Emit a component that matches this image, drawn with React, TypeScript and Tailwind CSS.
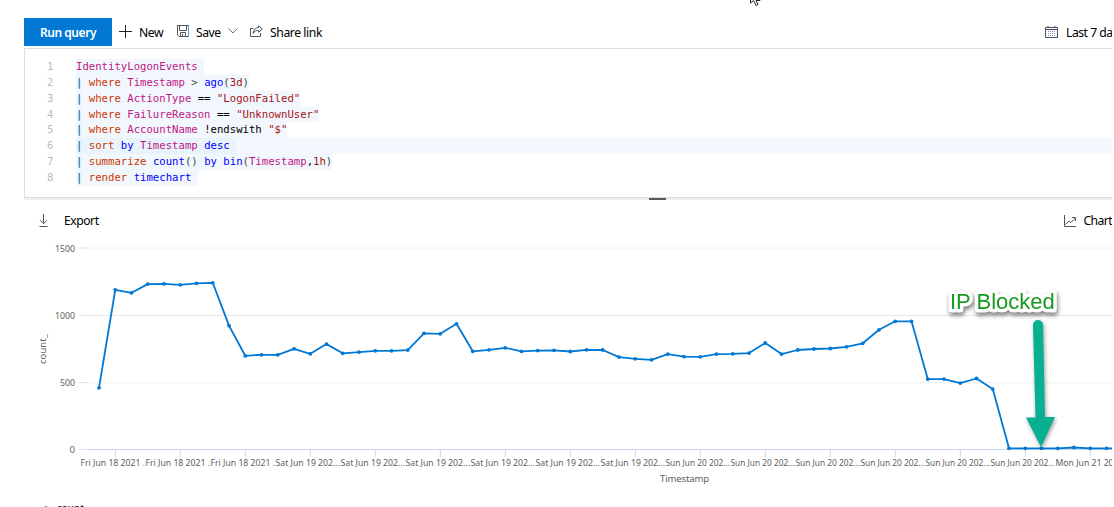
import React from 'react';

type Token = [text: string, color: string];

const FIELD = 'text-[#c01884]';
const OPERATOR = 'text-[#cc3700]';
const KEYWORD = 'text-[#0000ff]';
const LITERAL = 'text-[#a31515]';
const PLAIN = 'text-black';
const MUTED = 'text-[#3b4a3f]';

const QUERY: Token[][] = [
    [['IdentityLogonEvents ', FIELD]],
    [['where ', OPERATOR], ['Timestamp ', FIELD], ['> ', MUTED], ['ago', KEYWORD], ['(', MUTED], ['3d', LITERAL], [')', MUTED]],
    [['where ', OPERATOR], ['ActionType ', FIELD], ['== ', PLAIN], ['"LogonFailed"', LITERAL]],
    [['where ', OPERATOR], ['FailureReason ', FIELD], ['== ', PLAIN], ['"UnknownUser"', LITERAL]],
    [['where ', OPERATOR], ['AccountName ', FIELD], ['!endswith ', PLAIN], ['"$"', LITERAL]],
    [['sort ', OPERATOR], ['by ', KEYWORD], ['Timestamp ', FIELD], ['desc ', KEYWORD]],
    [['summarize ', OPERATOR], ['count', KEYWORD], ['() ', MUTED], ['by ', KEYWORD], ['bin', KEYWORD], ['(', MUTED], ['Timestamp', FIELD], [',', PLAIN], ['1h', LITERAL], [')', MUTED]],
    [['render ', OPERATOR], ['timechart ', KEYWORD]],
];
const ACTIVE_LINE = 5;

// y offsets of the hourly points inside the chart (0 is at 209.5, 1500 at 8)
const POINTS = [
    148, 50, 53, 44.3, 44, 45, 43.5, 43, 85.8, 116, 115, 115, 109, 114, 104.3, 113.5, 112.3, 111, 111, 110.3,
    93.5, 94, 84, 111.5, 110, 108, 111.5, 110.8, 110.5, 111.7, 110, 110.2, 117.3, 119, 120, 114.3, 116.8, 117,
    114.3, 114, 113.3, 103.2, 114.3, 110.2, 109.2, 108.7, 107, 103.5, 90, 81.5, 81.5, 139.3, 139.3, 143.3, 138.7,
    149.3, 208.5, 208.5, 208.5, 208.5, 207.7, 208.5, 208.5, 208.5,
].map((y, i) => ({ x: 99 + i * 16.25, y }));

const X_LABELS = [
    'Fri Jun 18 2021 .', 'Fri Jun 18 2021 .', 'Fri Jun 18 2021 .',
    'Sat Jun 19 202...', 'Sat Jun 19 202...', 'Sat Jun 19 202...', 'Sat Jun 19 202...', 'Sat Jun 19 202...', 'Sat Jun 19 202...',
    'Sun Jun 20 202...', 'Sun Jun 20 202...', 'Sun Jun 20 202...', 'Sun Jun 20 202...', 'Sun Jun 20 202...', 'Sun Jun 20 202...',
    'Mon Jun 21 202...',
];

const Y_LABELS = [
    { text: '1500', y: 8, width: 20, stroke: '#f2f2f2' },
    { text: '1000', y: 75.5, width: 20, stroke: '#e6e6e6' },
    { text: '500', y: 142.7, width: 15, stroke: '#f0f0f0' },
    { text: '0', y: 209.5, width: 5.5, stroke: '#ccd6eb' },
];

const Icon: React.FC<{ className: string; viewBox: string; children: React.ReactNode }> = ({ className, viewBox, children }) => (
    <svg className={`shrink-0 ${className}`} viewBox={viewBox} fill="none" stroke="#555" strokeWidth="1">
        {children}
    </svg>
);

const Toolbar: React.FC = () => (
    <div className="flex h-7 items-center text-[12.2px] text-black">
        <button className="h-7 w-[88px] shrink-0 bg-[#0078d4] text-[12px] font-semibold text-white">
            <span className="relative top-px tracking-[-0.45px]">Run query</span>
        </button>
        <div className="flex w-[58px] shrink-0 items-center pl-[7px]">
            <Icon className="h-[13px] w-[13px]" viewBox="0 0 13 13">
                <path d="M6.5 0v13M0 6.5h13" stroke="#222" />
            </Icon>
            <span className="relative top-px ml-[7px] tracking-[-0.4px]">New</span>
        </div>
        <div className="flex w-[73px] shrink-0 items-center pl-[7px]">
            <Icon className="-mt-0.5 h-3 w-3" viewBox="0 0 12 12">
                <path d="M.5.5h11v11H2L.5 10z" />
                <path d="M2.5.5v5h7v-5M3.5 11.5v-4h5v4M5.5 9v2.5" />
                <path d="M11.5 0v12" stroke="#4a9ad0" />
            </Icon>
            <span className="relative top-px ml-[7px] tracking-[-0.5px]">Save</span>
            <Icon className="-mt-0.5 ml-[7px] h-[6px] w-[10px]" viewBox="0 0 10 6">
                <path d="M.5.5 5 5 9.5.5" stroke="#777" />
            </Icon>
        </div>
        <div className="flex shrink-0 items-center pl-[7px]">
            <Icon className="-mt-0.5 h-3 w-[13px]" viewBox="0 0 13 12">
                <path d="M3.5 3.5h-3v8h10V8" />
                <path d="M8.5.7 12.3 4 8.5 7.3V5.5C6 5.3 4.3 6.3 3 8.5 3.3 5 5.5 2.8 8.5 2.5z" />
            </Icon>
            <span className="relative top-px ml-[7px] tracking-[-0.42px]">Share link</span>
        </div>
        <div className="ml-auto flex w-[67px] shrink-0 items-center whitespace-nowrap">
            <Icon className="h-3 w-[13px]" viewBox="0 0 13 12">
                <path d="M.5 1.5h12v10H.5zM.5 3.5h12M3 0v2M10 0v2" stroke="#4d4a66" />
                <path d="M3 5.5h7M3 7.5h7M3 9.5h7" stroke="#7899b8" strokeDasharray="1 1" />
            </Icon>
            <span className="relative top-px ml-2 tracking-[-0.5px]">Last 7 da</span>
        </div>
    </div>
);

const QueryEditor: React.FC = () => (
    <div className="mt-[2px] h-[150px] border-y border-l border-[#dcdcdc] pt-[10px] font-['DejaVu_Sans_Mono',monospace] text-[10.65px] leading-[15.86px] shadow-[0_2px_0_#eeeeee]">
        {QUERY.map((tokens, i) => (
            <div key={i} className="flex h-[15.86px] whitespace-pre">
                <span className="w-[51px] pl-[22px] text-[#b8bcc0]">{i + 1}</span>
                <div className={i === ACTIVE_LINE ? 'flex-1 bg-[#f3f8fe]' : 'flex-1'}>
                    <span className={i === ACTIVE_LINE ? 'inline-flex h-full bg-[#e9f3fc]' : 'inline-flex h-full bg-[#f2f7fe]'}>
                        {i > 0 && <span className="font-bold text-[#1678b0]">| </span>}
                        {tokens.map(([text, color], j) => (
                            <span key={j} className={color}>{text}</span>
                        ))}
                    </span>
                </div>
            </div>
        ))}
    </div>
);

const ResultsBar: React.FC = () => (
    <div className="flex h-[38px] items-center pt-px pl-[39px] text-[12.2px] text-black">
        <Icon className="-mt-0.5 h-[13px] w-[9px]" viewBox="0 0 9 13">
            <path d="M4.5 0v9.5M1 6.2l3.5 3.5L8 6.2M.5 12.5h8" />
        </Icon>
        <span className="ml-4 tracking-[-0.5px]">Export</span>
        <div className="ml-auto flex w-12 items-center whitespace-nowrap">
            <Icon className="h-3 w-3" viewBox="0 0 12 12">
                <path d="M.5 0v11.5H12M1.5 9.5 5 6l2 1.5L11.3 3M8 2.5h3.5V6" />
            </Icon>
            <span className="ml-[7.5px] shrink-0 tracking-[-0.6px]">Chart</span>
        </div>
    </div>
);

const TimeChart: React.FC = () => (
    <svg className="block h-[267px] w-[1112px] text-[9.5px]" viewBox="0 0 1112 267" fill="#606060">
        {Y_LABELS.map(({ text, y, width, stroke }) => (
            <g key={text}>
                <path d={`M79 ${y}H1112`} stroke={stroke} />
                <path d={`M79 ${y}h9`} stroke="#dbe3f1" />
                <text x={75} y={y + 3.5} textAnchor="end" textLength={width} lengthAdjust="spacingAndGlyphs">{text}</text>
            </g>
        ))}
        {X_LABELS.map((label, i) => (
            <g key={i}>
                <path d={`M${115.3 + i * 65} 210v7`} stroke="#ccd6eb" />
                <text x={80.5 + i * 65} y={225.7} textLength={i === 15 ? 70 : 64.5} lengthAdjust="spacingAndGlyphs">{label}</text>
            </g>
        ))}
        <text x={660} y={242} textLength={49}>Timestamp</text>
        <text transform="translate(46 124) rotate(-90)" textLength={30}>count_</text>

        <polyline points={POINTS.map(p => `${p.x},${p.y - 0.2}`).join(' ')} fill="none" stroke="#0078d4" strokeWidth="1.8" strokeLinejoin="round" />
        {POINTS.map(p => <circle key={p.x} cx={p.x} cy={p.y - 0.2} r="1.9" fill="#0078d4" />)}

        <path d="M39 269h14" stroke="#0078d4" />
        <circle cx="46" cy="268.5" r="2.2" fill="#0078d4" />
        <text x="57" y="271" fontSize="9.5" fontWeight="600" fill="#333" textLength="27">count</text>

        {/* annotation */}
        <g className="drop-shadow-[1px_3px_2px_rgba(0,0,0,0.5)]">
            <text x="950" y="69" fontSize="22" className="font-['Liberation_Sans',Arial,sans-serif]" fill="#169a22" stroke="#fff" strokeWidth="7" strokeLinejoin="round" paintOrder="stroke">
                IP Blocked
            </text>
        </g>
        <g className="drop-shadow-[1px_2px_2px_rgba(0,0,0,0.4)]" fill="#08b092">
            <path d="M1033 85a5 5 0 0 1 10 0l2 92h10l-14 30-15-29.5h9.5z" />
        </g>
    </svg>
);

const MousePointer: React.FC = () => (
    <svg className="absolute top-0 left-[750px] h-[7px] w-[11px]" viewBox="0 0 11 7" fill="#fff" stroke="#222">
        <path d="M.5-9v12l3-2.5 2.5 5 2-1-2-4h4z" />
    </svg>
);

export default function App() {
    return (
        <div className="relative h-[507px] w-[1114px] overflow-hidden bg-white font-['Noto_Sans','Open_Sans',sans-serif]">
            <MousePointer />
            <div className="h-[507px] w-[1112px] overflow-hidden pt-[18px]">
                <div className="pl-6">
                    <Toolbar />
                    <QueryEditor />
                    <div className="ml-[625px] h-[2px] w-[17px] bg-[#595959]" />
                </div>
                <div className="mt-[2px]">
                    <ResultsBar />
                    <TimeChart />
                </div>
            </div>
        </div>
    );
}
